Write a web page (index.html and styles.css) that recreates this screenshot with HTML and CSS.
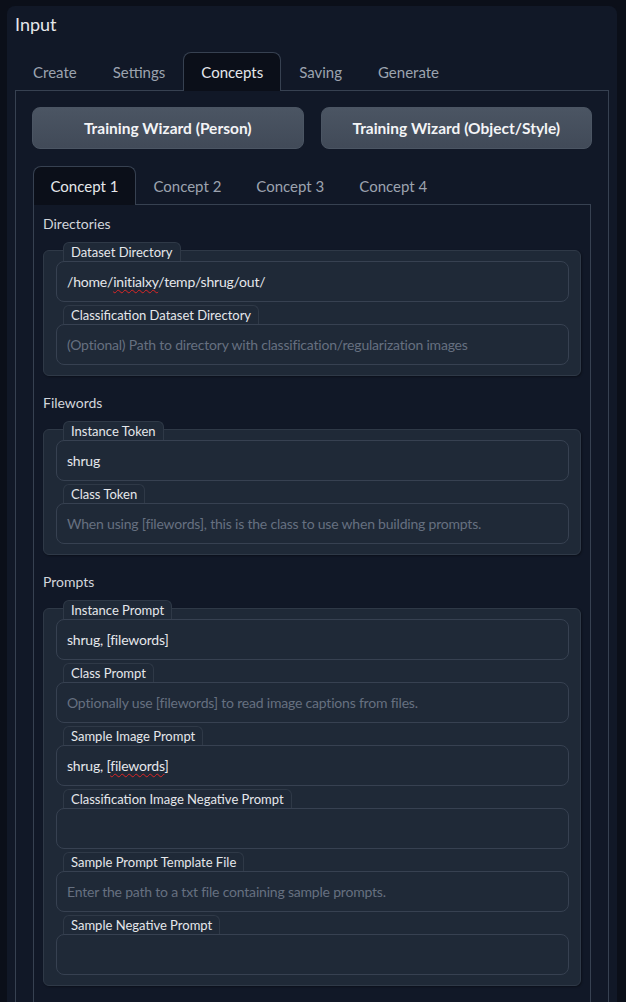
FILE: index.html
```html
<!DOCTYPE html>
<html>
<head>
<meta charset="utf-8">
<link rel="stylesheet" href="styles.css">
</head>
<body>
<div class="page">
  <div class="panel">
    <div class="title">Input</div>
    <div class="tabs">
      <div class="tab-nav">
        <button class="tab">Create</button>
        <button class="tab">Settings</button>
        <button class="tab selected">Concepts</button>
        <button class="tab">Saving</button>
        <button class="tab">Generate</button>
      </div>
      <div class="tab-body">
        <div class="btn-row">
          <button class="btn">Training Wizard (Person)</button>
          <button class="btn">Training Wizard (Object/Style)</button>
        </div>
        <div class="tabs inner">
          <div class="tab-nav">
            <button class="tab selected">Concept 1</button>
            <button class="tab">Concept 2</button>
            <button class="tab">Concept 3</button>
            <button class="tab">Concept 4</button>
          </div>
          <div class="tab-body inner-body">
            <div class="section-label">Directories</div>
            <div class="group">
              <div class="field">
                <span class="badge">Dataset Directory</span>
                <div class="input">/home/<span class="typo">initialxy</span>/temp/shrug/out/</div>
              </div>
              <div class="field">
                <span class="badge">Classification Dataset Directory</span>
                <div class="input placeholder">(Optional) Path to directory with classification/regularization images</div>
              </div>
            </div>

            <div class="section-label">Filewords</div>
            <div class="group">
              <div class="field">
                <span class="badge">Instance Token</span>
                <div class="input">shrug</div>
              </div>
              <div class="field">
                <span class="badge">Class Token</span>
                <div class="input placeholder">When using [filewords], this is the class to use when building prompts.</div>
              </div>
            </div>

            <div class="section-label">Prompts</div>
            <div class="group">
              <div class="field">
                <span class="badge">Instance Prompt</span>
                <div class="input">shrug, [filewords]</div>
              </div>
              <div class="field">
                <span class="badge">Class Prompt</span>
                <div class="input placeholder">Optionally use [filewords] to read image captions from files.</div>
              </div>
              <div class="field">
                <span class="badge">Sample Image Prompt</span>
                <div class="input">shrug, [<span class="typo">filewords</span>]</div>
              </div>
              <div class="field">
                <span class="badge">Classification Image Negative Prompt</span>
                <div class="input"></div>
              </div>
              <div class="field">
                <span class="badge">Sample Prompt Template File</span>
                <div class="input placeholder">Enter the path to a txt file containing sample prompts.</div>
              </div>
              <div class="field">
                <span class="badge">Sample Negative Prompt</span>
                <div class="input"></div>
              </div>
            </div>
          </div>
        </div>
      </div>
    </div>
  </div>
</div>
</body>
</html>
```

FILE: styles.css
```css
* { box-sizing: border-box; }
html, body {
  margin: 0;
  padding: 0;
  background: #0b0f19;
  font-family: "Lato", "Source Sans Pro", sans-serif;
  color: #e5e7eb;
  height: 1002px;
  overflow: hidden;
}
.page {
  padding: 6px 9px 0 7px;
}
.panel {
  background: #111827;
  border-radius: 8px;
  padding: 6px 8px 20px 8px;
  min-height: 1100px;
}
.title {
  font-size: 18px;
  line-height: 24px;
  color: #e5e7eb;
  margin-bottom: 16px;
}
.tabs { display: flex; flex-direction: column; }
.tab-nav {
  display: flex;
  position: relative;
  z-index: 1;
  margin-bottom: -1px;
}
.tab {
  font-family: inherit;
  font-size: 15px;
  line-height: 20px;
  padding: 8px 17px 9px 17px;
  height: 39px;
  background: transparent;
  border: 1px solid transparent;
  border-bottom: none;
  border-radius: 8px 8px 0 0;
  color: #9ca3af;
  cursor: pointer;
}
.inner .tab { padding: 8px 16.5px 9px 16.5px; }
.tab.selected {
  background: #0b0f19;
  border-color: #374151;
  color: #e5e7eb;
}
.tab-body {
  border: 1px solid #374151;
  padding: 16px;
}
.btn-row {
  display: grid;
  grid-template-columns: 1fr 1fr;
  gap: 17px;
  margin-bottom: 17px;
}
.btn {
  font-family: inherit;
  font-size: 15.5px;
  font-weight: 700;
  height: 42px;
  color: #f3f4f6;
  background: linear-gradient(to bottom, #4b5563, #414a58);
  border: 1px solid #4b5563;
  border-radius: 8px;
}
.inner { margin: 0 1px; }
.inner-body {
  padding: 9px 9px 60px 9px;
}
.section-label {
  font-size: 14px;
  line-height: 20px;
  color: #d1d5db;
}
.section-label + .group { margin-top: 16px; }
.group + .section-label { margin-top: 17px; }
.group {
  background: #1f2937;
  border: 1px solid #2f3947;
  border-radius: 6px;
  padding: 0 11px 10px 12px;
  display: flex;
  flex-direction: column;
  gap: 3px;
  box-shadow: 1px 1px 2px rgba(0,0,0,0.35);
}
.field { display: flex; flex-direction: column; }
.field:first-child { margin-top: -9px; }
.badge {
  align-self: flex-start;
  margin-left: 7px;
  height: 19px;
  padding: 0 7px;
  font-size: 13px;
  line-height: 18px;
  color: #e5e7eb;
  background: #1f2937;
  border: 1px solid #2f3947;
  border-bottom: none;
  border-radius: 6px 6px 0 0;
}
.input {
  height: 41px;
  border: 1px solid #374151;
  border-radius: 8px;
  background: #1f2937;
  padding: 0 10px;
  font-size: 14px;
  letter-spacing: -0.2px;
  line-height: 39px;
  color: #e5e7eb;
  white-space: nowrap;
  overflow: hidden;
}
.input.placeholder { color: #667080; }
.typo {
  text-decoration: underline wavy #dc2626;
  text-decoration-thickness: 1px;
  text-underline-offset: 2px;
}
```
